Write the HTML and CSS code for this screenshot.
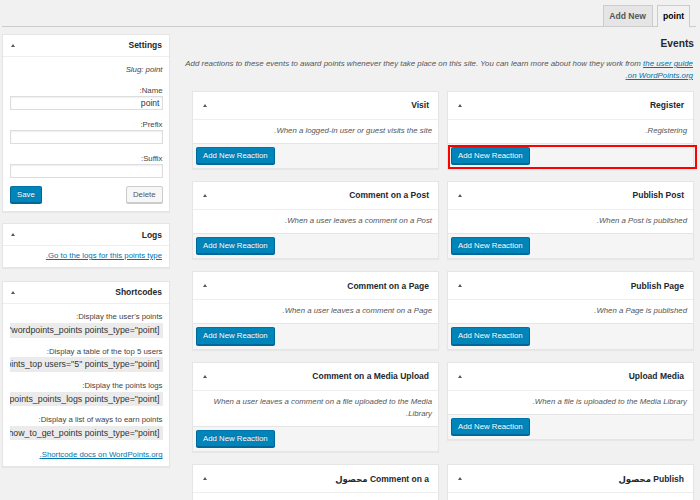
FILE: index.html
```html
<!DOCTYPE html>
<html lang="en" dir="rtl">
<head>
<meta charset="utf-8">
<title>Points Types</title>
<link rel="stylesheet" href="styles.css">
</head>
<body>
<div class="wrap">
  <nav class="tabs">
    <a class="tab tab-active" href="#">point</a>
    <a class="tab" href="#">Add New</a>
  </nav>

  <div class="layout">
    <main class="main">
      <h2 class="page-title">Events</h2>
      <p class="description">Add reactions to these events to award points whenever they take place on this site. You can learn more about how they work from <a href="#">the user guide on WordPoints.org.</a></p>

      <div class="events">
        <section class="event">
          <header class="event-header"><h3>Register</h3><span class="toggle"></span></header>
          <p class="event-desc">Registering.</p>
          <div class="event-footer highlighted"><a class="button button-primary" href="#">Add New Reaction</a></div>
        </section>
        <section class="event">
          <header class="event-header"><h3>Visit</h3><span class="toggle"></span></header>
          <p class="event-desc">When a logged-in user or guest visits the site.</p>
          <div class="event-footer"><a class="button button-primary" href="#">Add New Reaction</a></div>
        </section>

        <section class="event">
          <header class="event-header"><h3>Publish Post</h3><span class="toggle"></span></header>
          <p class="event-desc">When a Post is published.</p>
          <div class="event-footer"><a class="button button-primary" href="#">Add New Reaction</a></div>
        </section>
        <section class="event">
          <header class="event-header"><h3>Comment on a Post</h3><span class="toggle"></span></header>
          <p class="event-desc">When a user leaves a comment on a Post.</p>
          <div class="event-footer"><a class="button button-primary" href="#">Add New Reaction</a></div>
        </section>

        <section class="event">
          <header class="event-header"><h3>Publish Page</h3><span class="toggle"></span></header>
          <p class="event-desc">When a Page is published.</p>
          <div class="event-footer"><a class="button button-primary" href="#">Add New Reaction</a></div>
        </section>
        <section class="event">
          <header class="event-header"><h3>Comment on a Page</h3><span class="toggle"></span></header>
          <p class="event-desc">When a user leaves a comment on a Page.</p>
          <div class="event-footer"><a class="button button-primary" href="#">Add New Reaction</a></div>
        </section>

        <section class="event">
          <header class="event-header"><h3>Upload Media</h3><span class="toggle"></span></header>
          <p class="event-desc">When a file is uploaded to the Media Library.</p>
          <div class="event-footer"><a class="button button-primary" href="#">Add New Reaction</a></div>
        </section>
        <section class="event">
          <header class="event-header"><h3>Comment on a Media Upload</h3><span class="toggle"></span></header>
          <p class="event-desc">When a user leaves a comment on a file uploaded to the Media Library.</p>
          <div class="event-footer"><a class="button button-primary" href="#">Add New Reaction</a></div>
        </section>

        <section class="event">
          <header class="event-header"><h3>Publish محصول</h3><span class="toggle"></span></header>
          <p class="event-desc">When a محصول is published.</p>
          <div class="event-footer"><a class="button button-primary" href="#">Add New Reaction</a></div>
        </section>
        <section class="event">
          <header class="event-header"><h3>Comment on a محصول</h3><span class="toggle"></span></header>
          <p class="event-desc">When a user leaves a comment on a محصول.</p>
          <div class="event-footer"><a class="button button-primary" href="#">Add New Reaction</a></div>
        </section>
      </div>
    </main>

    <aside class="sidebar">
      <section class="postbox postbox-settings">
        <header class="postbox-header"><h3>Settings</h3><span class="toggle"></span></header>
        <div class="settings-inside">
          <p class="slug">Slug: point</p>
          <div class="field">
            <label class="field-label">Name:</label>
            <input class="field-input" type="text" value="point">
          </div>
          <div class="field">
            <label class="field-label">Prefix:</label>
            <input class="field-input" type="text" value="">
          </div>
          <div class="field">
            <label class="field-label">Suffix:</label>
            <input class="field-input" type="text" value="">
          </div>
          <div class="actions">
            <a class="button button-secondary" href="#">Delete</a>
            <a class="button button-primary" href="#">Save</a>
          </div>
        </div>
      </section>

      <section class="postbox postbox-logs">
        <header class="postbox-header"><h3>Logs</h3><span class="toggle"></span></header>
        <div class="logs-inside">
          <a class="box-link" href="#">Go to the logs for this points type.</a>
        </div>
      </section>

      <section class="postbox postbox-shortcodes">
        <header class="postbox-header"><h3>Shortcodes</h3><span class="toggle"></span></header>
        <div class="shortcodes-inside">
          <div class="shortcode">
            <p class="shortcode-label">Display the user's points:</p>
            <div class="code"><code>[wordpoints_points points_type="point"]</code></div>
          </div>
          <div class="shortcode">
            <p class="shortcode-label">Display a table of the top 5 users:</p>
            <div class="code"><code>[wordpoints_points_top users="5" points_type="point"]</code></div>
          </div>
          <div class="shortcode">
            <p class="shortcode-label">Display the points logs:</p>
            <div class="code"><code>[wordpoints_points_logs points_type="point"]</code></div>
          </div>
          <div class="shortcode">
            <p class="shortcode-label">Display a list of ways to earn points:</p>
            <div class="code"><code>[wordpoints_how_to_get_points points_type="point"]</code></div>
          </div>
          <a class="box-link docs-link" href="#">Shortcode docs on WordPoints.org.</a>
        </div>
      </section>
    </aside>
  </div>
</div>
</body>
</html>
```

FILE: styles.css
```css
* {
  box-sizing: border-box;
}

html,
body {
  height: 100%;
}

body {
  margin: 0;
  background: #f1f1f1;
  color: #444;
  font-family: "Liberation Sans", "DejaVu Sans", Arial, sans-serif;
  font-size: 7.8px;
  overflow: hidden;
}

a {
  color: #0073aa;
}

h2,
h3,
p {
  margin: 0;
}

.wrap {
  padding: 5px 4px 0 2px;
}

/* Tabs */
.tabs {
  display: flex;
  align-items: flex-start;
  gap: 4.5px;
  height: 22px;
  padding-right: 6px;
  border-bottom: 1px solid #ccc;
}

.tab {
  display: block;
  height: 21px;
  padding: 0 5.5px;
  border: 1px solid #ccc;
  border-bottom: 0;
  background: #e5e5e5;
  color: #555;
  font-size: 8.6px;
  font-weight: bold;
  line-height: 20px;
  text-decoration: none;
}

.tab-active {
  height: 22px;
  padding: 0 5px;
  background: #f1f1f1;
  color: #000;
}

/* Layout */
.layout {
  display: grid;
  grid-template-columns: 1fr 168px;
  column-gap: 14px;
  padding: 6.5px 2px 0 0;
}

.page-title {
  margin-top: 3.8px;
  color: #23282d;
  font-size: 10.2px;
  font-weight: bold;
  line-height: 14px;
}

.description {
  margin-top: 6.7px;
  padding-right: 1px;
  color: #555;
  font-size: 7.88px;
  font-style: italic;
  line-height: 12px;
}

/* Event boxes */
.events {
  display: grid;
  grid-template-columns: 1fr 1fr;
  column-gap: 8px;
  row-gap: 12px;
  align-items: start;
  margin: 8.6px 0 0 8px;
}

.event {
  background: #fff;
  border: 1px solid #e5e5e5;
  box-shadow: 0 1px 1px rgba(0, 0, 0, 0.04);
}

.event-header {
  display: flex;
  align-items: center;
  justify-content: space-between;
  height: 28px;
  padding: 0 9px 0 10px;
  border-bottom: 1px solid #eee;
}

.event-header h3,
.postbox-header h3 {
  color: #23282d;
  font-size: 8.5px;
  font-weight: bold;
}

.toggle {
  width: 0;
  height: 0;
  border-left: 2px solid transparent;
  border-right: 2px solid transparent;
  border-bottom: 3px solid #555;
}

.event-desc {
  padding: 5px 6px 6px;
  color: #555;
  font-style: italic;
  line-height: 12px;
}

.event-footer {
  display: flex;
  justify-content: flex-end;
  padding: 3px 3px 4px;
  background: #f5f5f5;
  border-top: 1px solid #e5e5e5;
}

.highlighted {
  position: relative;
}

.highlighted::after {
  content: "";
  position: absolute;
  top: 1px;
  right: -3.5px;
  bottom: -1px;
  left: 0;
  border: 2px solid #f00;
}

/* Buttons */
.button {
  display: inline-block;
  height: 17.4px;
  padding: 0 6px;
  border: 1px solid #ccc;
  border-radius: 2px;
  font-size: 7.8px;
  line-height: 15.4px;
  text-decoration: none;
  white-space: nowrap;
}

.button-primary {
  background: #0085ba;
  border-color: #0073aa #006799 #006799;
  box-shadow: 0 1px 0 #006799;
  color: #fff;
  text-shadow: 0 -1px 1px #006799;
}

.button-secondary {
  background: #f7f7f7;
  box-shadow: 0 1px 0 #ccc;
  color: #555;
}

/* Sidebar boxes */
.postbox {
  background: #fff;
  border: 1px solid #e5e5e5;
  box-shadow: 0 1px 1px rgba(0, 0, 0, 0.04);
}

.postbox-settings {
  margin-bottom: 11px;
}

.postbox-logs {
  margin-bottom: 13px;
}

.postbox-header {
  display: flex;
  align-items: center;
  justify-content: space-between;
  height: 22px;
  padding: 0 7px 0 8px;
  border-bottom: 1px solid #eee;
}

.settings-inside {
  padding: 7px 6.5px 8px 7px;
}

.slug {
  font-style: italic;
  line-height: 11px;
}

.field {
  margin-top: 8.5px;
}

.slug + .field {
  margin-top: 10px;
}

.field-label {
  display: block;
  line-height: 11px;
}

.field-input {
  display: block;
  width: 100%;
  height: 14.5px;
  margin: 0;
  padding: 0 2px;
  border: 1px solid #ddd;
  border-radius: 0;
  box-shadow: inset 0 1px 2px rgba(0, 0, 0, 0.07);
  background: #fff;
  color: #32373c;
  font-family: inherit;
  font-size: 8.6px;
  outline: none;
}

.actions {
  display: flex;
  justify-content: space-between;
  margin-top: 8px;
}

.logs-inside {
  padding: 3.5px 7px 6px;
  line-height: 11px;
}

.box-link {
  display: block;
  line-height: 11px;
}

.shortcodes-inside {
  padding: 7.5px 6.5px 5.5px 7px;
}

.shortcode + .shortcode {
  margin-top: 8.1px;
}

.shortcode-label {
  line-height: 11px;
}

.code {
  height: 14.4px;
  margin-top: 0.8px;
  padding: 0 3px;
  overflow: hidden;
  background: #ebebeb;
  white-space: nowrap;
}

.code code {
  color: #333;
  font-family: "Liberation Sans", "DejaVu Sans", Arial, sans-serif;
  font-size: 8.8px;
  line-height: 14.4px;
}

.docs-link {
  margin-top: 8.9px;
}
```
